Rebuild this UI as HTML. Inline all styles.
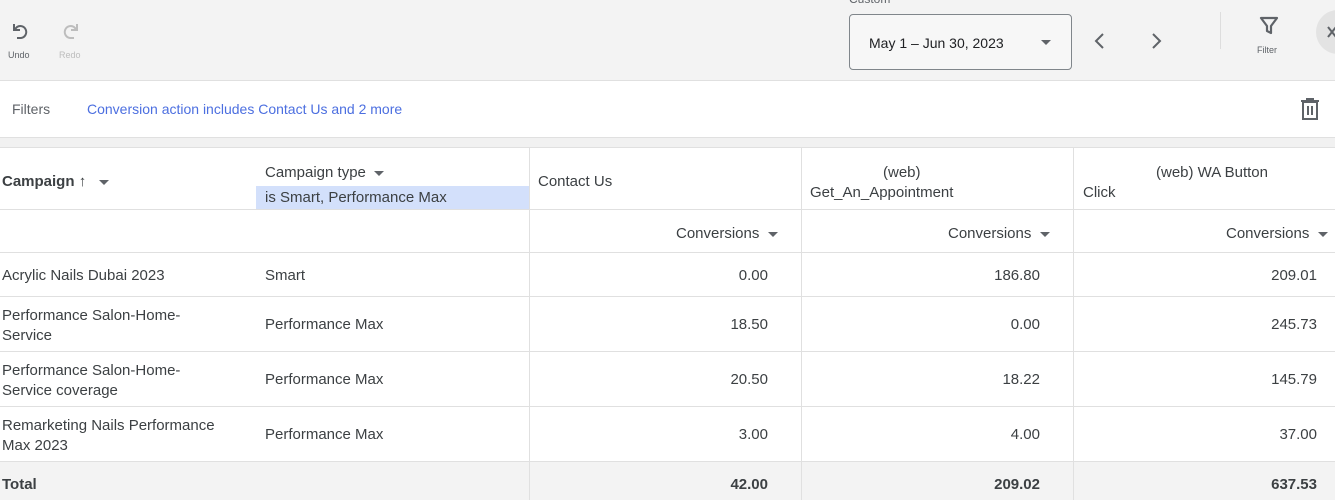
<!DOCTYPE html>
<html><head><style>
*{margin:0;padding:0;box-sizing:border-box}
body{width:1335px;height:500px;overflow:hidden;background:#fff;font-family:"Liberation Sans",Arial,sans-serif;color:#3c4043;position:relative}
.a{position:absolute;white-space:nowrap}
.hl{position:absolute;left:0;width:1335px;height:1px;background:#e0e0e0}
.vl{position:absolute;width:1px;background:#e0e0e0}
.t{font-size:15px;margin-top:1px}
.r{text-align:right}
.tri{display:inline-block;width:0;height:0;border-left:5px solid transparent;border-right:5px solid transparent;border-top:5px solid #5f6368;vertical-align:middle}
</style></head><body>
<div class="a" style="left:0;top:0;width:1335px;height:80px;background:#f3f3f3"></div>
<svg class="a" style="left:9px;top:20px" width="24" height="24" viewBox="0 0 24 24"><path d="M5 4v6h6M5 10l3-3a6 6 0 1 1 4 11H8" fill="none" stroke="#5f6368" stroke-width="2"/></svg>
<div class="a" style="left:8px;top:50px;font-size:9px;color:#5f6368">Undo</div>
<svg class="a" style="left:58px;top:20px" width="24" height="24" viewBox="0 0 24 24"><path d="M19 4v6h-6M19 10l-3-3a6 6 0 1 0-4 11h4" fill="none" stroke="#bdbdbd" stroke-width="2"/></svg>
<div class="a" style="left:59px;top:50px;font-size:9px;color:#bdbdbd">Redo</div>
<div class="a" style="left:849px;top:-8px;font-size:12px;color:#5f6368">Custom</div>
<div class="a" style="left:849px;top:14px;width:223px;height:56px;border:1px solid #80868b;border-radius:4px;background:#f7f7f7"></div>
<div class="a" style="left:869px;top:35px;font-size:14px;color:#202124">May 1 – Jun 30, 2023</div>
<span class="a tri" style="left:1041px;top:40px"></span>
<svg class="a" style="left:1090px;top:31px" width="20" height="20" viewBox="0 0 20 20"><path d="M13 3l-7 7 7 7" fill="none" stroke="#5f6368" stroke-width="2"/></svg>
<svg class="a" style="left:1146px;top:31px" width="20" height="20" viewBox="0 0 20 20"><path d="M7 3l7 7-7 7" fill="none" stroke="#5f6368" stroke-width="2"/></svg>
<div class="a" style="left:1220px;top:12px;width:1px;height:37px;background:#ddd"></div>
<svg class="a" style="left:1258px;top:15px" width="22" height="22" viewBox="0 0 22 22"><path d="M3 3h16l-6 8v7l-4-2v-5z" fill="none" stroke="#5f6368" stroke-width="2.2" stroke-linejoin="round"/></svg>
<div class="a" style="left:1257px;top:45px;font-size:9px;color:#5f6368">Filter</div>
<div class="a" style="left:1316px;top:10px;width:44px;height:44px;border-radius:50%;background:#e3e3e3"></div>
<svg class="a" style="left:1327px;top:26px" width="10" height="12" viewBox="0 0 10 12"><path d="M1 1l8 10M9 1l-8 10" stroke="#5f6368" stroke-width="2"/></svg>
<div class="hl" style="top:80px"></div>
<div class="a" style="left:12px;top:101px;font-size:14px;color:#5f6368">Filters</div>
<div class="a" style="left:87px;top:101px;font-size:14px;color:#4c6fe0">Conversion action includes Contact Us and 2 more</div>
<svg class="a" style="left:1299px;top:97px" width="22" height="24" viewBox="0 0 22 24"><path d="M2 4h18M8 4V2h6v2M4 5h14v17H4zM9 9v9M13 9v9" fill="none" stroke="#5f6368" stroke-width="2"/></svg>
<div class="a" style="left:0;top:137px;width:1335px;height:11px;background:#f1f1f1;border-top:1px solid #e0e0e0;border-bottom:1px solid #e0e0e0"></div>
<div class="a" style="left:256px;top:186px;width:273px;height:24px;background:#d3e0fb"></div>
<div class="vl" style="left:529px;top:148px;height:352px"></div>
<div class="vl" style="left:801px;top:148px;height:352px"></div>
<div class="vl" style="left:1073px;top:148px;height:352px"></div>
<div class="hl" style="top:209px"></div>
<div class="hl" style="top:252px"></div>
<div class="hl" style="top:296px"></div>
<div class="hl" style="top:351px"></div>
<div class="hl" style="top:406px"></div>
<div class="hl" style="top:461px"></div>
<div class="a" style="left:0;top:462px;width:1335px;height:38px;background:#f3f3f3"></div>
<div class="vl" style="left:529px;top:462px;height:38px"></div>
<div class="vl" style="left:801px;top:462px;height:38px"></div>
<div class="vl" style="left:1073px;top:462px;height:38px"></div>
<div class="a t" style="left:2px;top:172px;font-weight:bold;color:#3c4043">Campaign <span style="font-weight:normal">↑</span> &nbsp;&nbsp;<span class="tri"></span></div>
<div class="a t" style="left:265px;top:163px">Campaign type &nbsp;<span class="tri"></span></div>
<div class="a t" style="left:265px;top:188px">is Smart, Performance Max</div>
<div class="a t" style="left:538px;top:172px">Contact Us</div>
<div class="a t" style="left:883px;top:163px">(web)</div>
<div class="a t" style="left:810px;top:183px">Get_An_Appointment</div>
<div class="a t" style="left:1156px;top:163px">(web) WA Button</div>
<div class="a t" style="left:1083px;top:183px">Click</div>
<div class="a t" style="left:676px;top:224px">Conversions &nbsp;<span class="tri"></span></div>
<div class="a t" style="left:948px;top:224px">Conversions &nbsp;<span class="tri"></span></div>
<div class="a t" style="left:1226px;top:224px">Conversions &nbsp;<span class="tri"></span></div>
<div class="a t" style="left:2px;top:266px">Acrylic Nails Dubai 2023</div>
<div class="a t" style="left:265px;top:266px">Smart</div>
<div class="a t" style="left:2px;top:305px;line-height:20px">Performance Salon-Home-<br>Service</div>
<div class="a t" style="left:265px;top:315px">Performance Max</div>
<div class="a t" style="left:2px;top:360px;line-height:20px">Performance Salon-Home-<br>Service coverage</div>
<div class="a t" style="left:265px;top:370px">Performance Max</div>
<div class="a t" style="left:2px;top:415px;line-height:20px">Remarketing Nails Performance<br>Max 2023</div>
<div class="a t" style="left:265px;top:425px">Performance Max</div>
<div class="a t" style="left:2px;top:475px;font-weight:bold">Total</div>
<div class="a t r" style="left:600px;width:168px;top:266px">0.00</div>
<div class="a t r" style="left:600px;width:168px;top:315px">18.50</div>
<div class="a t r" style="left:600px;width:168px;top:370px">20.50</div>
<div class="a t r" style="left:600px;width:168px;top:425px">3.00</div>
<div class="a t r" style="left:600px;width:168px;top:475px;font-weight:bold">42.00</div>
<div class="a t r" style="left:870px;width:170px;top:266px">186.80</div>
<div class="a t r" style="left:870px;width:170px;top:315px">0.00</div>
<div class="a t r" style="left:870px;width:170px;top:370px">18.22</div>
<div class="a t r" style="left:870px;width:170px;top:425px">4.00</div>
<div class="a t r" style="left:870px;width:170px;top:475px;font-weight:bold">209.02</div>
<div class="a t r" style="left:1140px;width:177px;top:266px">209.01</div>
<div class="a t r" style="left:1140px;width:177px;top:315px">245.73</div>
<div class="a t r" style="left:1140px;width:177px;top:370px">145.79</div>
<div class="a t r" style="left:1140px;width:177px;top:425px">37.00</div>
<div class="a t r" style="left:1140px;width:177px;top:475px;font-weight:bold">637.53</div>
</body></html>
